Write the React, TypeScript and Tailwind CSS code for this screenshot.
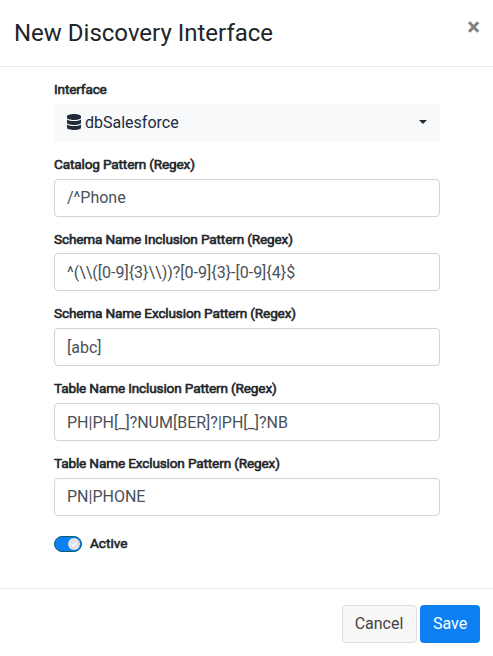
const fields = [
  { label: 'Catalog Pattern (Regex)', value: '/^Phone' },
  { label: 'Schema Name Inclusion Pattern (Regex)', value: '^(\\\\([0-9]{3}\\\\))?[0-9]{3}-[0-9]{4}$' },
  { label: 'Schema Name Exclusion Pattern (Regex)', value: '[abc]' },
  { label: 'Table Name Inclusion Pattern (Regex)', value: 'PH|PH[_]?NUM[BER]?|PH[_]?NB' },
  { label: 'Table Name Exclusion Pattern (Regex)', value: 'PN|PHONE' },
];

function Label({ text }: { text: string }) {
  return <div className="mb-[4.75px] h-5 text-[13.6px] leading-5 tracking-[-0.15px] text-[#212529] [-webkit-text-stroke:0.6px_currentColor]">{text}</div>;
}

export default function App() {
  return (
    <div className="flex h-[656px] w-[493px] flex-col bg-white font-['Roboto',sans-serif] text-[#212529]">
      <header className="flex h-[67px] items-start justify-between border-b border-[#e9ecef] pl-[14px] pr-[13px]">
        <h1 className="pt-[15px] text-2xl leading-9">New Discovery Interface</h1>
        <button className="pt-[15px] text-2xl font-bold leading-6 text-[#7f7f7f]">×</button>
      </header>
      <main className="flex h-[521px] flex-col pl-[54px] pr-[53px] pt-[12.25px]">
        <div className="mb-[11.75px]">
          <Label text="Interface" />
          <div className="flex h-[38px] items-center rounded bg-[#f8f9fa] px-[13px] text-base text-[#212b3a]">
            <svg className="mb-0.5 mr-1 h-4 w-3.5" viewBox="0 0 448 512" fill="currentColor">
              <path d="M448 73.143v45.714C448 159.143 347.667 192 224 192S0 159.143 0 118.857V73.143C0 32.857 100.333 0 224 0s224 32.857 224 73.143zM448 176v102.857C448 319.143 347.667 352 224 352S0 319.143 0 278.857V176c48.125 33.143 136.208 48.572 224 48.572S399.874 209.143 448 176zm0 160v102.857C448 479.143 347.667 512 224 512S0 479.143 0 438.857V336c48.125 33.143 136.208 48.572 224 48.572S399.874 369.143 448 336z" />
            </svg>
            <span className="flex-1">dbSalesforce</span>
            <span className="mb-0.5 border-x-4 border-t-4 border-x-transparent border-t-current" />
          </div>
        </div>
        {fields.map((f) => (
          <div key={f.label} className="mb-3">
            <Label text={f.label} />
            <div className="flex h-[38px] items-center rounded border border-[#ced4da] px-3 pt-[1.6px] text-base text-[#495057]">{f.value}</div>
          </div>
        ))}
        <div className="mt-[6px] flex h-5 items-center gap-2">
          <span className="mt-px flex h-4 w-7 items-center justify-end rounded-full border border-[#0b5d66] bg-[#0c7ff2] pr-px">
            <svg className="size-3" viewBox="0 0 12 12">
              <circle cx="6" cy="6" r="6" fill="#dee2e6" />
              <path d="M3.5 6.2 5.3 8 8.7 4.5" fill="none" stroke="#fff" strokeWidth="1.3" />
            </svg>
          </span>
          <span className="mb-[1.5px] text-[13.6px] leading-5 [-webkit-text-stroke:0.6px_currentColor]">Active</span>
        </div>
      </main>
      <footer className="flex h-[68px] items-start justify-end gap-[3px] border-t border-[#e9ecef] pr-[13px] pt-4">
        <button className="h-[38px] w-[75px] rounded border border-[#ddd] bg-[#f8f8f8] pr-px text-[#444]">Cancel</button>
        <button className="h-[38px] w-[60px] rounded bg-[#0c7ff2] text-white">Save</button>
      </footer>
    </div>
  );
}
